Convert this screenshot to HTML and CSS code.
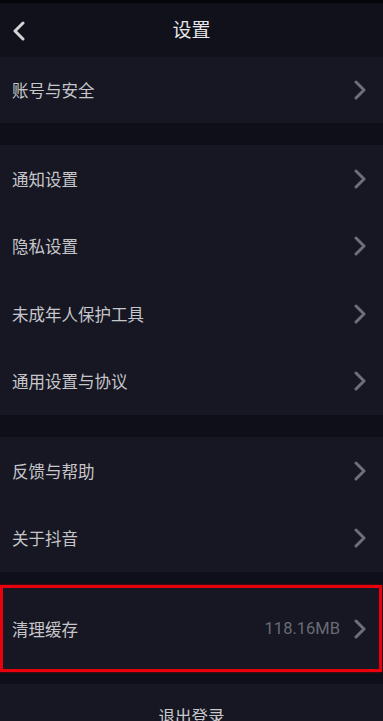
FILE: index.html
```html
<!DOCTYPE html>
<html lang="zh-CN">

<head>
    <meta charset="UTF-8">
    <meta name="viewport" content="width=device-width, initial-scale=1.0">
    <title>设置</title>
    <link rel="stylesheet" href="styles.css">
</head>

<body>
    <div class="status-strip"></div>
    <header class="topbar">
        <a class="back" href="#">
            <svg width="14" height="20" viewBox="0 0 14 20">
                <path d="M11 2 L3 10 L11 18" fill="none" stroke="#d4d4d8" stroke-width="3" stroke-linecap="round" stroke-linejoin="round" />
            </svg>
        </a>
        <h1>设置</h1>
    </header>

    <section class="group">
        <a class="row" href="#"><span class="label">账号与安全</span><span class="chev"></span></a>
    </section>

    <section class="group">
        <a class="row" href="#"><span class="label">通知设置</span><span class="chev"></span></a>
        <a class="row" href="#"><span class="label">隐私设置</span><span class="chev"></span></a>
        <a class="row" href="#"><span class="label">未成年人保护工具</span><span class="chev"></span></a>
        <a class="row" href="#"><span class="label">通用设置与协议</span><span class="chev"></span></a>
    </section>

    <section class="group">
        <a class="row" href="#"><span class="label">反馈与帮助</span><span class="chev"></span></a>
        <a class="row" href="#"><span class="label">关于抖音</span><span class="chev"></span></a>
    </section>

    <section class="group highlight">
        <a class="row tall" href="#">
            <span class="label">清理缓存</span>
            <span class="value">118.16MB</span>
            <span class="chev"></span>
        </a>
    </section>

    <section class="group">
        <a class="logout" href="#">退出登录</a>
    </section>

    <script>
        // same chevron svg in every row
        const chevSvg = '<svg width="14" height="20" viewBox="0 0 14 20"><path d="M3 2 L11 10 L3 18" fill="none" stroke="#6e6f78" stroke-width="3" stroke-linecap="round" stroke-linejoin="round"/></svg>';
        document.querySelectorAll('.chev').forEach(el => el.innerHTML = chevSvg);
    </script>
</body>

</html>
```

FILE: styles.css
```css
/* General Reset */
* {
    margin: 0;
    padding: 0;
    box-sizing: border-box;
}

body {
    font-family: 'Noto Sans CJK SC', 'Noto Sans', sans-serif;
    background-color: #0e0f18;
    color: #c9c9cd;
    width: 383px;
    height: 721px;
    overflow: hidden;
}

a {
    text-decoration: none;
    color: inherit;
}

.status-strip {
    height: 3px;
    background-color: #060608;
}

.topbar {
    position: relative;
    height: 54px;
    background-color: #11111b;
    display: flex;
    align-items: center;
    justify-content: center;
}

.topbar h1 {
    font-size: 19px;
    font-weight: normal;
    color: #e6e6ea;
    margin-top: -4px;
}

.topbar .back {
    position: absolute;
    left: 12px;
    top: 18px;
    display: flex;
}

.group {
    background-color: #161722;
    margin-bottom: 22px;
}

.row {
    display: flex;
    align-items: center;
    height: 67.5px;
    padding: 0 12px 0 12px;
    font-size: 16.5px;
}

.group:first-of-type .row {
    height: 66px;
}

.label {
    flex: 1;
    color: #c6c6cb;
}

.value {
    color: #6a6b74;
    font-family: 'Roboto', 'Noto Sans', sans-serif;
    font-size: 16.5px;
    margin-right: 13px;
}

.chev {
    display: flex;
    margin-right: 4px;
}

/* red annotation box round the cache row */
.highlight {
    margin-top: -9px;
    border: 3px solid #e8000c;
    box-shadow: 0 0 2px rgba(232, 0, 12, 0.6);
    margin-right: 1px;
    margin-bottom: 12px;
}

.row.tall {
    height: 81px;
    padding-left: 9px;
    padding-right: 8px;
}

.logout {
    display: block;
    text-align: center;
    font-size: 16.5px;
    color: #c9c9cd;
    padding-top: 20px;
    height: 60px;
}
```
